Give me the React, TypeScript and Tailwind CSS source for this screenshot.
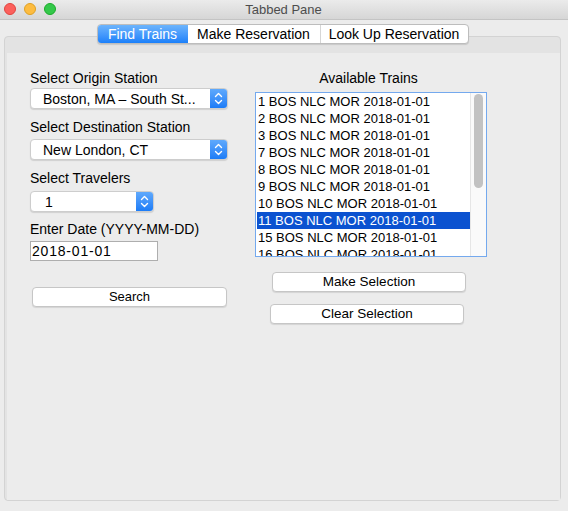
import React from "react";

const trains = ["1", "2", "3", "7", "8", "9", "10", "11", "15", "16"];

function Chevrons() {
  return (
    <svg width="17" height="21" viewBox="0 0 17 21" className="block">
      <path d="M5.5 8.5 L8.5 5.5 L11.5 8.5" stroke="white" strokeWidth="1.4" fill="none" strokeLinecap="round" strokeLinejoin="round" />
      <path d="M5.5 12.5 L8.5 15.5 L11.5 12.5" stroke="white" strokeWidth="1.4" fill="none" strokeLinecap="round" strokeLinejoin="round" />
    </svg>
  );
}

function Combo({ text, width, pl }: { text: string; width: string; pl: string }) {
  return (
    <div className={`flex h-[21px] ${width} rounded-[4px] border border-[#cdcdcd] bg-white shadow-[0_1px_1px_rgba(0,0,0,0.12)] overflow-hidden`}>
      <div className={`flex-1 flex items-center ${pl} text-[14px] leading-[16px] text-black whitespace-nowrap overflow-hidden`}>{text}</div>
      <div className="w-[17px] h-full bg-linear-to-b from-[#5fa9fc] to-[#1b7cf7] flex items-center justify-center">
        <Chevrons />
      </div>
    </div>
  );
}

function Btn({ label, cls }: { label: string; cls: string }) {
  return (
    <div className={`h-[20px] rounded-[4px] border border-[#c6c6c6] bg-white shadow-[0_1px_1px_rgba(0,0,0,0.10)] flex items-center justify-center text-black leading-[16px] ${cls}`}>
      {label}
    </div>
  );
}

export default function App() {
  return (
    <div className="w-[568px] h-[511px] bg-[#ececec] flex flex-col overflow-hidden" style={{ fontFamily: '"Liberation Sans", Arial, sans-serif' }}>
      {/* title bar */}
      <div className="relative h-[20px] shrink-0 bg-linear-to-b from-[#ebebeb] to-[#d6d6d6] border-b border-[#c4c4c4] flex items-center justify-center">
        <div className="absolute left-[4px] top-[3px] flex gap-[8px]">
          <div className="w-[12px] h-[12px] rounded-full bg-[#fc605c] border border-[#e0443e]" />
          <div className="w-[12px] h-[12px] rounded-full bg-[#fdbc40] border border-[#dea123]" />
          <div className="w-[12px] h-[12px] rounded-full bg-[#34c84a] border border-[#1aab29]" />
        </div>
        <span className="text-[13px] leading-[16px] text-[#4d4d4d] ml-[-1px]">Tabbed Pane</span>
      </div>

      {/* tabs */}
      <div className="relative z-10 mt-[4px] ml-[4px] mr-[7px] flex justify-center shrink-0">
        <div className="flex h-[20px] rounded-[4px] border border-[#bdbdbd] bg-white shadow-[0_1px_1px_rgba(0,0,0,0.12)] text-[14px] leading-[16px] overflow-hidden">
          <div className="w-[90px] flex items-center justify-center text-white bg-linear-to-b from-[#6cb4fc] to-[#1a80fa]">Find Trains</div>
          <div className="w-[133px] flex items-center justify-center text-black border-r border-[#d6d6d6]">Make Reservation</div>
          <div className="w-[147px] flex items-center justify-center text-black">Look Up Reservation</div>
        </div>
      </div>

      {/* panel */}
      <div className="-mt-[8px] ml-[4px] mr-[7px] mb-[10px] flex-1 rounded-[4px] border border-[#d3d3d3] bg-[#e3e3e3] flex flex-col">
        <div className="mt-[16px] ml-[2px] flex-1 bg-[#ececec] flex flex-row pl-[23px] pt-[17px]">
          {/* left column */}
          <div className="w-[198px] flex flex-col">
            <div className="text-[14px] leading-[16px] text-black">Select Origin Station</div>
            <div className="mt-[2px]">
              <Combo text="Boston, MA – South St..." width="w-[198px]" pl="pl-[12px]" />
            </div>
            <div className="mt-[10px] text-[14px] leading-[16px] text-black">Select Destination Station</div>
            <div className="mt-[4px]">
              <Combo text="New London, CT" width="w-[198px]" pl="pl-[12px]" />
            </div>
            <div className="mt-[10px] text-[14px] leading-[16px] text-black">Select Travelers</div>
            <div className="mt-[5px]">
              <Combo text="1" width="w-[124px]" pl="pl-[14px]" />
            </div>
            <div className="mt-[9px] text-[14px] leading-[16px] text-black">Enter Date (YYYY-MM-DD)</div>
            <div className="mt-[4px] w-[128px] h-[20px] border border-[#aeaeae] bg-white flex items-center pl-[1px] text-[14px] leading-[16px] tracking-[0.8px] text-black">
              2018-01-01
            </div>
            <div className="mt-[26px] ml-[2px]">
              <Btn label="Search" cls="w-[195px] text-[13px]" />
            </div>
          </div>

          {/* right column */}
          <div className="ml-[27px] w-[232px] flex flex-col">
            <div className="text-[14px] leading-[16px] text-black text-center pr-[5px]">Available Trains</div>
            <div className="mt-[6px] h-[165px] border border-[#74a9ee] bg-white flex overflow-hidden">
              <div className="flex-1 flex flex-col pt-[0px] pl-[1px] overflow-hidden">
                {trains.map((t) => (
                  <div
                    key={t}
                    className={`h-[17px] shrink-0 flex items-center pl-[1px] text-[13px] leading-[16px] whitespace-nowrap ${t === "11" ? "bg-[#0b52d0] text-white" : "text-black"}`}
                  >
                    {t} BOS NLC MOR 2018-01-01
                  </div>
                ))}
              </div>
              <div className="w-[16px] h-full bg-[#fafafa] border-l border-[#e6e6e6] flex justify-center pt-[1px]">
                <div className="w-[9px] h-[94px] rounded-full bg-[#c2c2c2]" />
              </div>
            </div>
            <div className="mt-[15px] ml-[17px]">
              <Btn label="Make Selection" cls="w-[194px] text-[13.5px]" />
            </div>
            <div className="mt-[12px] ml-[15px]">
              <Btn label="Clear Selection" cls="w-[194px] text-[13.5px]" />
            </div>
          </div>
        </div>
      </div>
    </div>
  );
}
